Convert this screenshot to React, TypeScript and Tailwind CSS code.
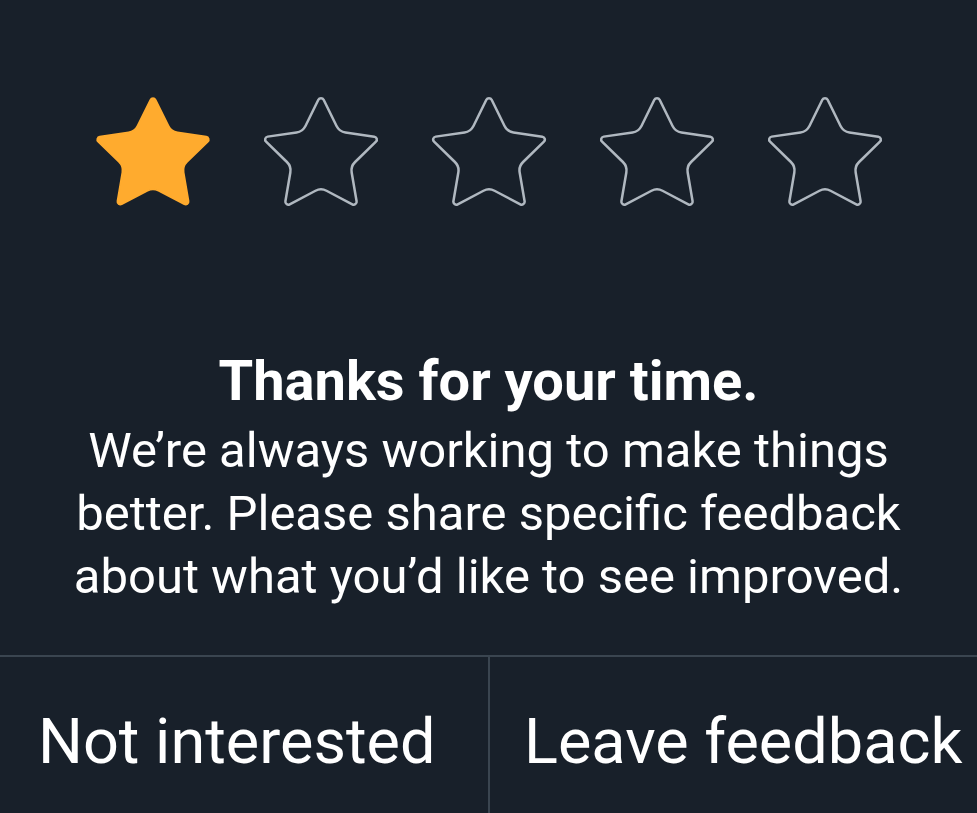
import React from 'react';

const STAR =
  'M11.525 2.295a.53.53 0 0 1 .95 0l2.31 4.679a2.123 2.123 0 0 0 1.595 1.16l5.166.756a.53.53 0 0 1 .294.904l-3.736 3.638a2.123 2.123 0 0 0-.611 1.878l.882 5.14a.53.53 0 0 1-.771.56l-4.618-2.428a2.122 2.122 0 0 0-1.973 0L6.396 21.01a.53.53 0 0 1-.77-.56l.881-5.139a2.122 2.122 0 0 0-.611-1.879L2.16 9.795a.53.53 0 0 1 .294-.906l5.165-.755a2.122 2.122 0 0 0 1.597-1.16z';

function Star({ filled }: { filled: boolean }) {
  return (
    <svg viewBox="0 0 24 24" className="w-[134px] h-[134px]">
      <path
        d={STAR}
        fill={filled ? '#ffab2e' : 'none'}
        stroke={filled ? '#ffab2e' : '#b0b8c0'}
        strokeWidth={filled ? 0.3 : 0.45}
        strokeLinejoin="round"
      />
    </svg>
  );
}

export default function App() {
  const rating = 1;
  return (
    <div className="w-[977px] h-[813px] bg-[#18202a] flex flex-col overflow-hidden font-['Roboto',sans-serif] text-white">
      <div className="flex justify-center gap-[34px] pt-[87px]">
        {[1, 2, 3, 4, 5].map((n) => (
          <Star key={n} filled={n <= rating} />
        ))}
      </div>

      <div className="flex flex-col items-center text-center mt-[128px]">
        <h2 className="text-[56px] leading-[64px] font-bold">Thanks for your time.</h2>
        <p className="mt-[6px] text-[49px] leading-[63px] whitespace-nowrap">
          We’re always working to make things
          <br />
          better. Please share specific feedback
          <br />
          about what you’d like to see improved.
        </p>
      </div>

      <div className="mt-auto h-[158px] border-t-2 border-[#3a4550] flex">
        <button className="w-[490px] border-r-2 border-[#3a4550] text-[63px] leading-[74px] text-left pl-[38px] self-stretch flex items-start pt-[48px]">
          Not interested
        </button>
        <button className="flex-1 text-[63px] leading-[74px] text-left pl-[34px] flex items-start pt-[48px]">
          Leave feedback
        </button>
      </div>
    </div>
  );
}
